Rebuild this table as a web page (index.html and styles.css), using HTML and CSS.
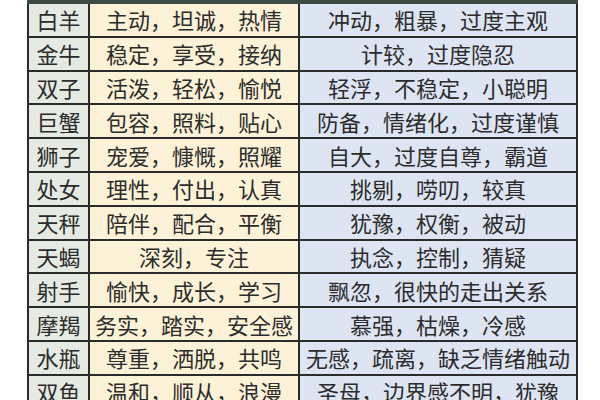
FILE: index.html
```html
<!DOCTYPE html>
<html lang="zh">
<head>
<meta charset="utf-8">
<link rel="stylesheet" href="styles.css">
</head>
<body>
<table class="traits">
  <tbody>
    <tr><td class="sign">白羊</td><td class="good">主动，坦诚，热情</td><td class="bad">冲动，粗暴，过度主观</td></tr>
    <tr><td class="sign">金牛</td><td class="good">稳定，享受，接纳</td><td class="bad">计较，过度隐忍</td></tr>
    <tr><td class="sign">双子</td><td class="good">活泼，轻松，愉悦</td><td class="bad">轻浮，不稳定，小聪明</td></tr>
    <tr><td class="sign">巨蟹</td><td class="good">包容，照料，贴心</td><td class="bad">防备，情绪化，过度谨慎</td></tr>
    <tr><td class="sign">狮子</td><td class="good">宠爱，慷慨，照耀</td><td class="bad">自大，过度自尊，霸道</td></tr>
    <tr><td class="sign">处女</td><td class="good">理性，付出，认真</td><td class="bad">挑剔，唠叨，较真</td></tr>
    <tr><td class="sign">天秤</td><td class="good">陪伴，配合，平衡</td><td class="bad">犹豫，权衡，被动</td></tr>
    <tr><td class="sign">天蝎</td><td class="good">深刻，专注</td><td class="bad">执念，控制，猜疑</td></tr>
    <tr><td class="sign">射手</td><td class="good">愉快，成长，学习</td><td class="bad">飘忽，很快的走出关系</td></tr>
    <tr><td class="sign">摩羯</td><td class="good">务实，踏实，安全感</td><td class="bad">慕强，枯燥，冷感</td></tr>
    <tr><td class="sign">水瓶</td><td class="good">尊重，洒脱，共鸣</td><td class="bad">无感，疏离，缺乏情绪触动</td></tr>
    <tr><td class="sign">双鱼</td><td class="good">温和，顺从，浪漫</td><td class="bad">圣母，边界感不明，犹豫</td></tr>
  </tbody>
</table>
</body>
</html>
```

FILE: styles.css
```css
html, body {
  margin: 0;
  padding: 0;
  background: #ffffff;
}
body {
  width: 600px;
  height: 400px;
  overflow: hidden;
  font-family: "Noto Sans CJK SC", "Noto Sans", sans-serif;
}
.traits {
  margin-left: 27px;
  width: 551px;
  border-collapse: collapse;
  table-layout: fixed;
  border-top: 4px solid #3b4a42;
}
.traits td {
  border: 2px solid #2a2c2b;
  height: 31.8px;
  padding: 0;
  text-align: center;
  vertical-align: middle;
  font-size: 22px;
  line-height: 31px;
  color: #2c2c2c;
  white-space: nowrap;
  overflow: hidden;
}
.traits tr:first-child td {
  border-top: none;
}
.sign {
  width: 59px;
  background: #e5ebe2;
}
.good {
  width: 208px;
  background: #fcf2d7;
}
.bad {
  background: #dde5f2;
}
```
